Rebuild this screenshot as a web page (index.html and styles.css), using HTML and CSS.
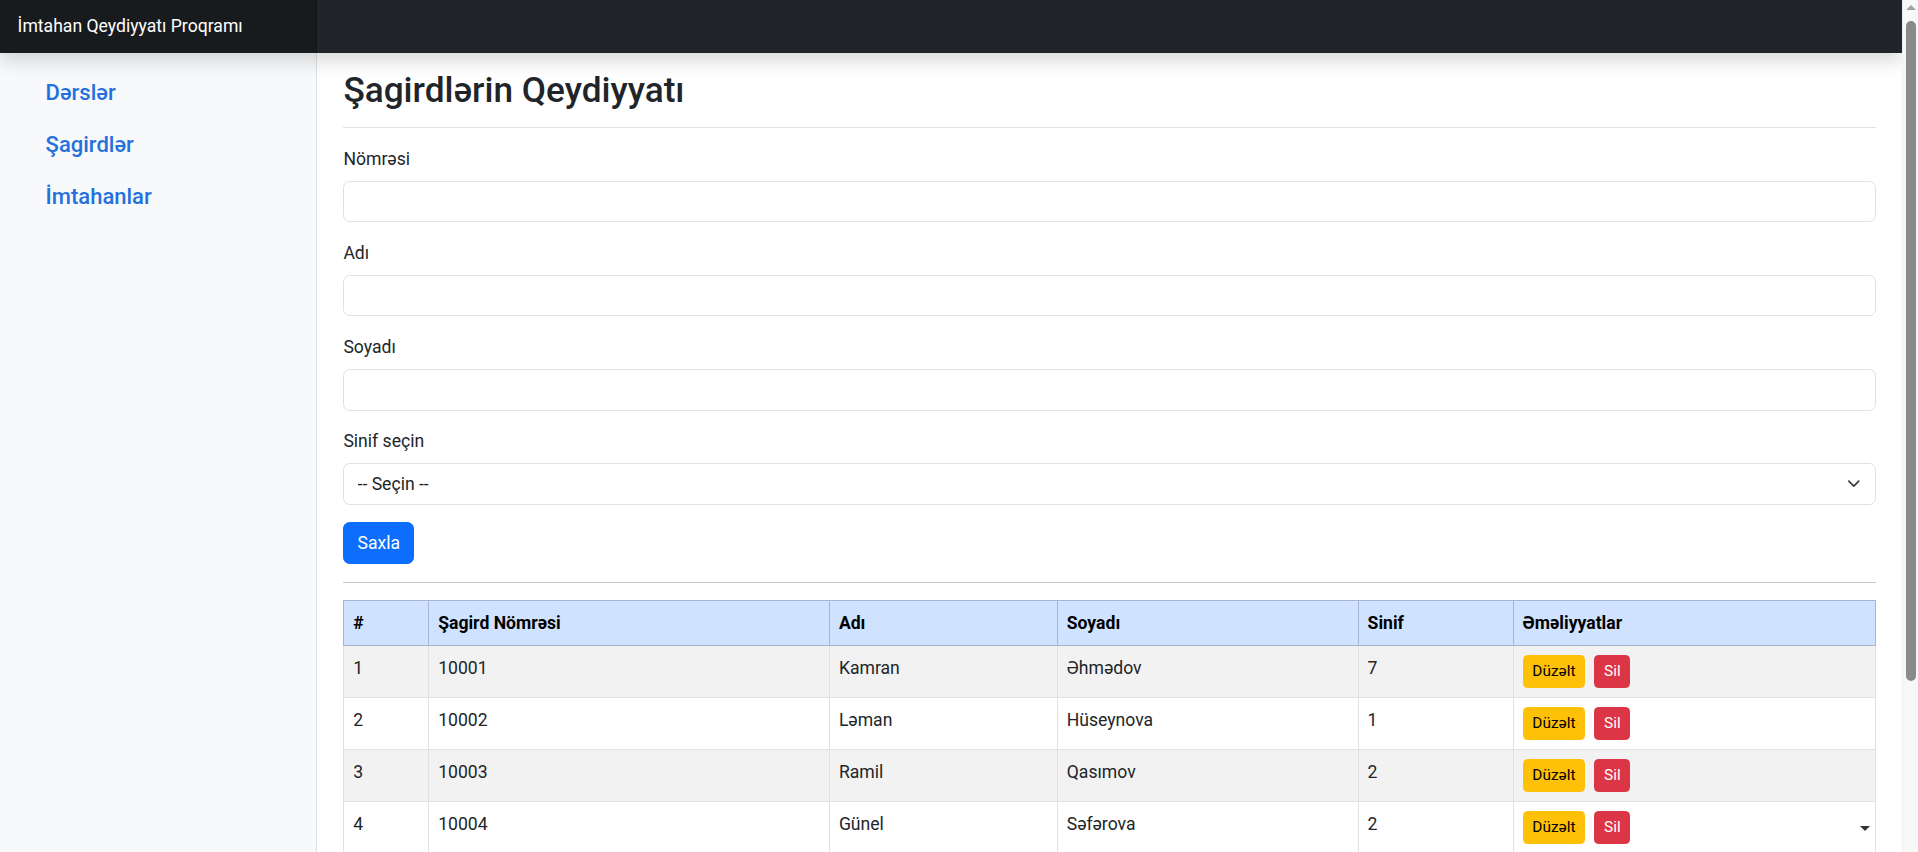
FILE: index.html
```html
<!DOCTYPE html>
<html lang="az">
<head>
<meta charset="utf-8">
<title>İmtahan Qeydiyyatı Proqramı</title>
<link rel="stylesheet" href="styles.css">
</head>
<body>
<div class="page">
  <header class="topbar">
    <a class="brand" href="#">İmtahan Qeydiyyatı Proqramı</a>
  </header>
  <div class="layout">
    <nav class="sidebar">
      <ul class="side-nav">
        <li><a class="side-link" href="#">Dərslər</a></li>
        <li><a class="side-link" href="#">Şagirdlər</a></li>
        <li><a class="side-link" href="#">İmtahanlar</a></li>
      </ul>
    </nav>
    <main class="main">
      <div class="page-head">
        <h2 class="page-title">Şagirdlərin Qeydiyyatı</h2>
      </div>
      <form class="form">
        <div class="field">
          <label class="field-label">Nömrəsi</label>
          <input class="control" type="text">
        </div>
        <div class="field">
          <label class="field-label">Adı</label>
          <input class="control" type="text">
        </div>
        <div class="field">
          <label class="field-label">Soyadı</label>
          <input class="control" type="text">
        </div>
        <div class="field">
          <label class="field-label">Sinif seçin</label>
          <div class="select-wrap">
            <select class="control select">
              <option>-- Seçin --</option>
            </select>
            <svg class="select-chevron" viewBox="0 0 16 16" width="18" height="14"><path d="m2 5 6 6 6-6" fill="none" stroke="#343a40" stroke-linecap="round" stroke-linejoin="round" stroke-width="2"/></svg>
          </div>
        </div>
        <button class="btn btn-primary" type="button">Saxla</button>
      </form>
      <hr class="divider">
      <table class="grid">
        <colgroup>
          <col class="c-num"><col class="c-no"><col class="c-name"><col class="c-surname"><col class="c-class"><col class="c-act">
        </colgroup>
        <thead>
          <tr><th>#</th><th>Şagird Nömrəsi</th><th>Adı</th><th>Soyadı</th><th>Sinif</th><th>Əməliyyatlar</th></tr>
        </thead>
        <tbody>
          <tr><td>1</td><td>10001</td><td>Kamran</td><td>Əhmədov</td><td>7</td><td><div class="actions"><button class="btn-sm btn-warn" type="button">Düzəlt</button><button class="btn-sm btn-danger" type="button">Sil</button></div></td></tr>
          <tr><td>2</td><td>10002</td><td>Ləman</td><td>Hüseynova</td><td>1</td><td><div class="actions"><button class="btn-sm btn-warn" type="button">Düzəlt</button><button class="btn-sm btn-danger" type="button">Sil</button></div></td></tr>
          <tr><td>3</td><td>10003</td><td>Ramil</td><td>Qasımov</td><td>2</td><td><div class="actions"><button class="btn-sm btn-warn" type="button">Düzəlt</button><button class="btn-sm btn-danger" type="button">Sil</button></div></td></tr>
          <tr><td>4</td><td>10004</td><td>Günel</td><td>Səfərova</td><td>2</td><td class="act-cell"><div class="actions"><button class="btn-sm btn-warn" type="button">Düzəlt</button><button class="btn-sm btn-danger" type="button">Sil</button></div><span class="caret"></span></td></tr>
          <tr><td>5</td><td>10005</td><td>Elvin</td><td>Məmmədov</td><td>5</td><td><div class="actions"><button class="btn-sm btn-warn" type="button">Düzəlt</button><button class="btn-sm btn-danger" type="button">Sil</button></div></td></tr>
        </tbody>
      </table>
    </main>
  </div>
</div>
<div class="scrollbar" aria-hidden="true">
  <span class="scroll-arrow"></span>
  <span class="scroll-thumb"></span>
</div>
</body>
</html>
```
FILE: styles.css
```css
* { box-sizing: border-box; }

html, body {
  margin: 0;
  padding: 0;
}

body {
  display: flex;
  height: 100vh;
  overflow: hidden;
  font-family: Roboto, "Liberation Sans", sans-serif;
  font-size: 17.6px;
  line-height: 1.5;
  color: #212529;
  background: #fff;
}

.page {
  flex: 1 1 auto;
  min-width: 0;
  overflow: hidden;
}

/* decorative browser scrollbar */
.scrollbar {
  flex: 0 0 16px;
  display: flex;
  flex-direction: column;
  align-items: center;
  background: #f8f8f8;
  border-left: 1px solid #efefef;
}

.scroll-arrow {
  margin-top: 5px;
  width: 0;
  height: 0;
  border-left: 5px solid transparent;
  border-right: 5px solid transparent;
  border-bottom: 5px solid #a3a3a3;
}

.scroll-thumb {
  margin-top: 11px;
  width: 10px;
  height: 660px;
  border-radius: 5px;
  background: #8a8a8a;
}

.topbar {
  position: relative;
  z-index: 2;
  display: flex;
  height: 52.8px;
  background: #212529;
  box-shadow: 0 8.8px 17.6px rgba(0, 0, 0, 0.15);
}

.brand {
  flex: 0 0 16.6667%;
  display: flex;
  align-items: center;
  padding: 0 17.6px;
  font-size: 17.6px;
  color: #fff;
  text-decoration: none;
  background: rgba(0, 0, 0, 0.25);
  box-shadow: inset -1px 0 0 rgba(0, 0, 0, 0.25);
}

.layout {
  display: flex;
  align-items: stretch;
  min-height: calc(100vh - 52.8px);
}

.sidebar {
  flex: 0 0 16.6667%;
  background: #f8f9fa;
  box-shadow: inset -1px 0 0 rgba(0, 0, 0, 0.1);
  padding: 14px 0 0 28px;
}

.side-nav {
  list-style: none;
  margin: 0;
  padding: 0;
}

.side-link {
  display: block;
  padding: 9.4px 17.6px;
  font-size: 22px;
  font-weight: 500;
  line-height: 33px;
  color: #2470dc;
  text-decoration: none;
}

.main {
  flex: 1 1 auto;
  min-width: 0;
  padding: 16px 26.4px 17.6px;
}

.page-head {
  padding-bottom: 16px;
  margin-bottom: 17.6px;
  border-bottom: 1px solid #dee2e6;
}

.page-title {
  margin: 0;
  font-size: 35.2px;
  font-weight: 500;
  line-height: 1.2;
}

.form {
  margin: 0;
}

.field {
  margin-bottom: 17.6px;
}

.field-label {
  display: block;
  margin-bottom: 8.8px;
  line-height: 26.4px;
}

.control {
  display: block;
  width: 100%;
  height: 41.4px;
  padding: 6.6px 13.2px;
  font-family: inherit;
  font-size: 17.6px;
  line-height: 26.4px;
  color: #212529;
  background: #fff;
  border: 1px solid #dee2e6;
  border-radius: 6.6px;
}

.select-wrap {
  position: relative;
}

.select {
  appearance: none;
  -webkit-appearance: none;
  padding-right: 40px;
}

.select-chevron {
  position: absolute;
  right: 13.2px;
  top: 50%;
  width: 17.6px;
  height: 13.2px;
  margin-top: -6.6px;
  pointer-events: none;
}

.btn {
  display: inline-block;
  padding: 6.6px 13.2px;
  font-family: inherit;
  font-size: 17.6px;
  line-height: 26.4px;
  border: 1px solid transparent;
  border-radius: 6.6px;
  cursor: pointer;
}

.btn-primary {
  color: #fff;
  background: #0d6efd;
  border-color: #0d6efd;
}

.divider {
  margin: 17.6px 0;
  border: 0;
  border-top: 1px solid rgba(33, 37, 41, 0.25);
}

.grid {
  width: 100%;
  border-collapse: collapse;
  table-layout: fixed;
  margin-bottom: 17.6px;
}

.c-num { width: 5.55%; }
.c-no { width: 26.17%; }
.c-name { width: 14.88%; }
.c-surname { width: 19.65%; }
.c-class { width: 10.12%; }
.c-act { width: 23.63%; }

.grid th,
.grid td {
  padding: 8.8px;
  text-align: left;
  vertical-align: top;
  border: 1px solid #dee2e6;
  line-height: 26.4px;
}

.grid thead th {
  background: #cfe2ff;
  border-color: #a6b5cc;
  color: #000;
  font-weight: 700;
}

.grid tbody tr:nth-child(odd) td {
  background: #f2f2f2;
}

.actions {
  display: flex;
  gap: 9px;
}

.btn-sm {
  display: inline-block;
  padding: 4.4px 8.8px;
  font-family: inherit;
  font-size: 15.4px;
  line-height: 22.6px;
  border: 1px solid transparent;
  border-radius: 4.4px;
  cursor: pointer;
}

.btn-warn {
  color: #000;
  background: #ffc107;
  border-color: #ffc107;
}

.btn-danger {
  color: #fff;
  background: #dc3545;
  border-color: #dc3545;
}

.act-cell {
  position: relative;
}

.caret {
  position: absolute;
  right: 5px;
  top: 50%;
  margin-top: -2px;
  width: 0;
  height: 0;
  border-left: 5px solid transparent;
  border-right: 5px solid transparent;
  border-top: 5px solid #333;
}
```
